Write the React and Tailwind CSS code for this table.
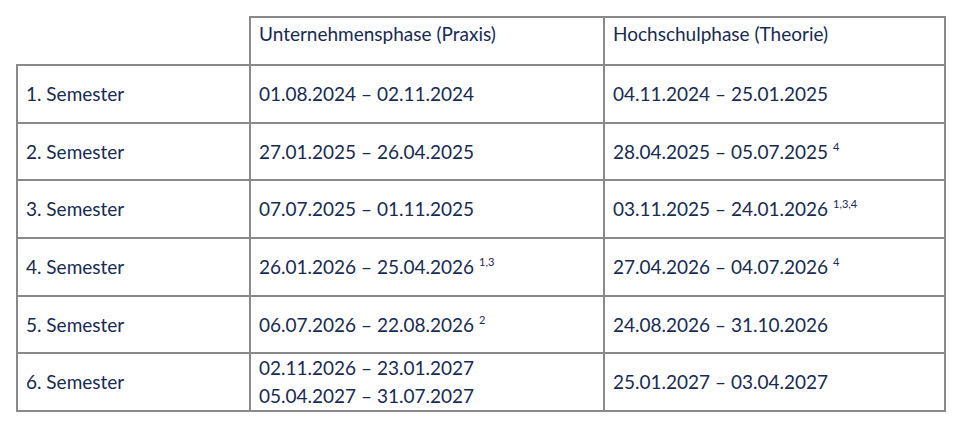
import React from "react";

const rows = [
  { sem: "1. Semester", praxis: [["01.08.2024 – 02.11.2024"]], theorie: ["04.11.2024 – 25.01.2025"] },
  { sem: "2. Semester", praxis: [["27.01.2025 – 26.04.2025"]], theorie: ["28.04.2025 – 05.07.2025", "4"] },
  { sem: "3. Semester", praxis: [["07.07.2025 – 01.11.2025"]], theorie: ["03.11.2025 – 24.01.2026", "1,3,4"] },
  { sem: "4. Semester", praxis: [["26.01.2026 – 25.04.2026", "1,3"]], theorie: ["27.04.2026 – 04.07.2026", "4"] },
  { sem: "5. Semester", praxis: [["06.07.2026 – 22.08.2026", "2"]], theorie: ["24.08.2026 – 31.10.2026"] },
  {
    sem: "6. Semester",
    praxis: [["02.11.2026 – 23.01.2027"], ["05.04.2027 – 31.07.2027"]],
    theorie: ["25.01.2027 – 03.04.2027"],
  },
];

function Dates({ text, note }) {
  return (
    <span>
      {text}
      {note && <sup className="ml-[5px] text-[11px] relative -top-[8px]">{note}</sup>}
    </span>
  );
}

export default function App() {
  const cell = "border-2 border-[#8a8a8a] pl-[8px] align-middle";
  return (
    <div
      className="w-[960px] h-[430px] bg-white pt-[16px] pl-[16px] text-[#172a52] text-[19px] leading-[28px]"
      style={{ fontFamily: "Lato, 'Open Sans', sans-serif" }}
    >
      <table className="border-collapse table-fixed w-[928px]">
        <colgroup>
          <col className="w-[233px]" />
          <col className="w-[354px]" />
          <col className="w-[341px]" />
        </colgroup>
        <thead>
          <tr className="h-[48px]">
            <th className="font-normal"></th>
            <th className={`${cell} align-top text-left font-normal pt-[2px]`}>Unternehmensphase (Praxis)</th>
            <th className={`${cell} align-top text-left font-normal pt-[2px]`}>Hochschulphase (Theorie)</th>
          </tr>
        </thead>
        <tbody>
          {rows.map((r) => (
            <tr key={r.sem} className="h-[57.7px]">
              <td className={cell}>{r.sem}</td>
              <td className={cell}>
                {r.praxis.map((p, i) => (
                  <div key={i}>
                    <Dates text={p[0]} note={p[1]} />
                  </div>
                ))}
              </td>
              <td className={cell}>
                <Dates text={r.theorie[0]} note={r.theorie[1]} />
              </td>
            </tr>
          ))}
        </tbody>
      </table>
    </div>
  );
}
